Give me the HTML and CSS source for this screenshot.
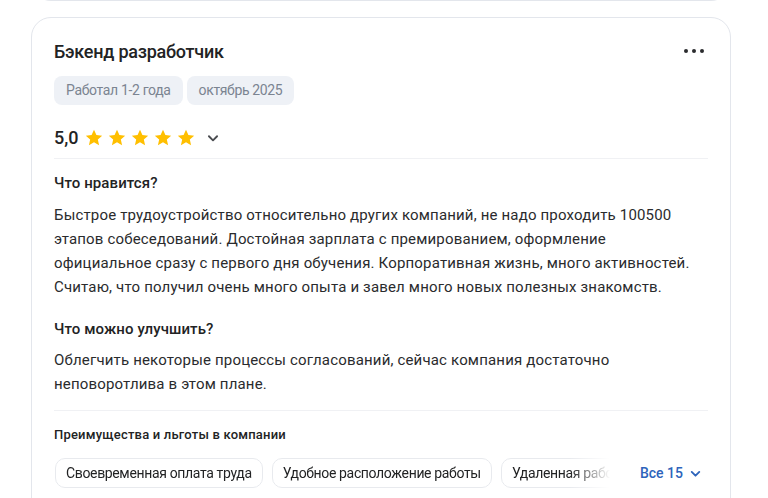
FILE: index.html
```html
<!DOCTYPE html>
<html lang="ru">
<head>
<meta charset="utf-8">
<link rel="stylesheet" href="styles.css">
</head>
<body>
<div class="page">
  <div class="prev-card"></div>
  <article class="card">
    <header class="card-head">
      <h2 class="title">Бэкенд разработчик</h2>
      <button class="more" aria-label="Ещё"><span></span><span></span><span></span></button>
    </header>
    <div class="tags">
      <span class="tag">Работал 1-2 года</span>
      <span class="tag">октябрь 2025</span>
    </div>
    <div class="rating">
      <span class="score">5,0</span>
      <span class="stars">
        <svg viewBox="0 0 24 24"><path d="M12 2.2l2.9 6.3 6.9.7-5.2 4.6 1.5 6.8L12 17.1l-6.1 3.5 1.5-6.8-5.2-4.6 6.9-.7z"/></svg>
        <svg viewBox="0 0 24 24"><path d="M12 2.2l2.9 6.3 6.9.7-5.2 4.6 1.5 6.8L12 17.1l-6.1 3.5 1.5-6.8-5.2-4.6 6.9-.7z"/></svg>
        <svg viewBox="0 0 24 24"><path d="M12 2.2l2.9 6.3 6.9.7-5.2 4.6 1.5 6.8L12 17.1l-6.1 3.5 1.5-6.8-5.2-4.6 6.9-.7z"/></svg>
        <svg viewBox="0 0 24 24"><path d="M12 2.2l2.9 6.3 6.9.7-5.2 4.6 1.5 6.8L12 17.1l-6.1 3.5 1.5-6.8-5.2-4.6 6.9-.7z"/></svg>
        <svg viewBox="0 0 24 24"><path d="M12 2.2l2.9 6.3 6.9.7-5.2 4.6 1.5 6.8L12 17.1l-6.1 3.5 1.5-6.8-5.2-4.6 6.9-.7z"/></svg>
      </span>
      <svg class="chev" viewBox="0 0 12 12"><path d="M2.5 4.5L6 8l3.5-3.5" fill="none" stroke="#4a4c50" stroke-width="1.6" stroke-linecap="round" stroke-linejoin="round"/></svg>
    </div>
    <section class="block">
      <h3 class="q">Что нравится?</h3>
      <p class="a">Быстрое трудоустройство относительно других компаний, не надо проходить 100500 этапов собеседований. Достойная зарплата с премированием, оформление официальное сразу с первого дня обучения. Корпоративная жизнь, много активностей. Считаю, что получил очень много опыта и завел много новых полезных знакомств.</p>
    </section>
    <section class="block block-2">
      <h3 class="q">Что можно улучшить?</h3>
      <p class="a a-2">Облегчить некоторые процессы согласований, сейчас компания достаточно неповоротлива в этом плане.</p>
    </section>
    <section class="benefits">
      <h4 class="b-title">Преимущества и льготы в компании</h4>
      <div class="b-row">
        <div class="chips">
          <span class="chip">Своевременная оплата труда</span>
          <span class="chip">Удобное расположение работы</span>
          <span class="chip">Удаленная работа</span>
        </div>
        <button class="all">Все 15
          <svg viewBox="0 0 12 12"><path d="M2.5 4.5L6 8l3.5-3.5" fill="none" stroke="#2d64bb" stroke-width="1.7" stroke-linecap="round" stroke-linejoin="round"/></svg>
        </button>
      </div>
    </section>
  </article>
</div>
</body>
</html>
```

FILE: styles.css
```css
* { box-sizing: border-box; }
html, body { margin: 0; padding: 0; background: #fff; }
body {
  font-family: Roboto, "Noto Sans", "Liberation Sans", sans-serif;
  color: #222324;
  width: 768px;
  height: 498px;
  overflow: hidden;
}
.page {
  padding-left: 31px;
}
.prev-card {
  width: 700px;
  height: 20px;
  margin-top: -19px;
  border: 1px solid #e3e6ec;
  border-top: none;
  border-radius: 0 0 20px 20px;
}
.card {
  width: 700px;
  margin-top: 16px;
  border: 1px solid #e3e6ec;
  border-radius: 20px;
  padding: 22px 22px 0 22px;
  height: 520px;
}
.card-head {
  display: flex;
  align-items: center;
  justify-content: space-between;
}
.title {
  margin: 0;
  font-size: 18px;
  line-height: 24px;
  font-weight: 500;
  letter-spacing: -0.25px;
}
.more {
  display: flex;
  gap: 4px;
  background: none;
  border: 0;
  padding: 0 4px 0 0;
  margin-top: -2px;
}
.more span {
  width: 4px; height: 4px;
  border-radius: 50%;
  background: #2a2b2e;
}
.tags {
  display: flex;
  gap: 4px;
  margin-top: 12px;
}
.tag {
  background: #eef1f6;
  color: #7b8491;
  font-size: 14px;
  line-height: 29px;
  height: 29px;
  padding: 0 12px;
  border-radius: 8px;
  letter-spacing: -0.35px;
}
.rating {
  display: flex;
  align-items: center;
  height: 24px;
  margin-top: 21px;
  padding-bottom: 8px;
  box-sizing: content-box;
  border-bottom: 1px solid #f0f1f4;
}
.score {
  font-size: 18px;
  font-weight: 500;
  line-height: 24px;
  margin-right: 5px;
}
.stars {
  display: flex;
  gap: 3px;
}
.stars svg {
  width: 20px; height: 20px;
  fill: #ffbf00;
}
.chev {
  width: 14px; height: 14px;
  margin-left: 10px;
}
.block { padding-top: 12px; }
.block-2 { padding-top: 18px; }
.q {
  margin: 0;
  font-size: 15px;
  line-height: 24px;
  font-weight: 500;
  letter-spacing: 0.1px;
}
.a {
  margin: 8px 0 0 0;
  max-width: 644px;
  font-size: 15px;
  line-height: 24px;
  font-weight: 400;
  letter-spacing: 0.17px;
  color: #2a2b2d;
}
.a-2 { margin-top: 7px; }
.benefits {
  margin-top: 14px;
  border-top: 1px solid #f0f1f4;
  padding-top: 14px;
}
.b-title {
  margin: 0;
  font-size: 13px;
  line-height: 20px;
  font-weight: 500;
  letter-spacing: 0.2px;
}
.b-row {
  display: flex;
  align-items: center;
  margin-top: 13px;
}
.chips {
  flex: 1;
  min-width: 0;
  display: flex;
  gap: 9px;
  overflow: hidden;
  padding-left: 1px;
  -webkit-mask-image: linear-gradient(to right, #000 0, #000 calc(100% - 40px), transparent 100%);
  mask-image: linear-gradient(to right, #000 0, #000 calc(100% - 40px), transparent 100%);
}
.chip {
  flex: none;
  height: 30px;
  line-height: 28px;
  padding: 0 10px;
  font-size: 14px;
  letter-spacing: -0.35px;
  border: 1px solid #e8eaee;
  border-radius: 10px;
  color: #222324;
  white-space: nowrap;
}
.all {
  flex: none;
  display: flex;
  align-items: center;
  gap: 6px;
  background: none;
  border: 0;
  padding: 0 6px 0 30px;
  font-family: inherit;
  font-size: 14px;
  font-weight: 500;
  color: #2d64bb;
}
.all svg { width: 13px; height: 13px; }
```
